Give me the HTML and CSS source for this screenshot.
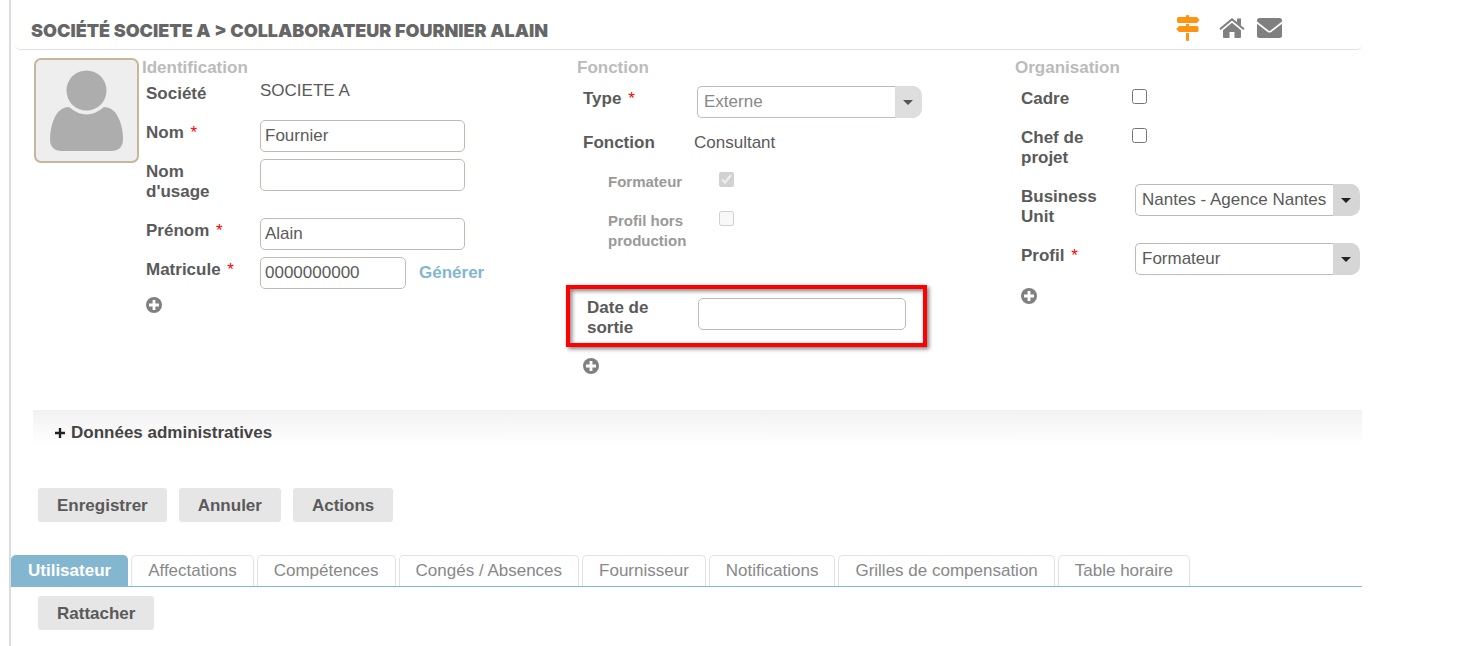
FILE: index.html
```html
<!DOCTYPE html>
<html lang="fr">
<head>
  <meta charset="UTF-8">
  <meta name="viewport" content="width=device-width, initial-scale=1.0">
  <title>Collaborateur</title>
  <link rel="stylesheet" href="styles.css">
</head>
<body>
  <svg class="sprite" aria-hidden="true">
    <symbol id="plus-circle" viewBox="0 0 16 16">
      <circle cx="8" cy="8" r="8" fill="#808080"/>
      <path d="M8 3v10M3 8h10" stroke="#fff" stroke-width="2.800"/>
    </symbol>
  </svg>

  <div class="page">
    <header class="page-header">
      <h1>SOCIÉTÉ SOCIETE A &gt; COLLABORATEUR FOURNIER ALAIN</h1>
      <nav class="header-icons">
        <a href="#" class="icon-sign" aria-label="Guide">
          <svg width="24" height="26" viewBox="0 0 24 26" fill="#ff9410">
            <path d="M10 1q0-1 1-1h1q1 0 1 1v1h7q1 0 1.500.500L23.500 5 21.500 7.500Q21 8 20 8H3Q1 8 1 6.500v-3Q1 2 3 2h7z"/>
            <path d="M10 9h3v2h8q1.500 0 1.500 1.500v3Q22.500 17 21 17H4q-1 0-1.500-.500L.300 14l2.200-2.500Q3 11 4 11h6z"/>
            <path d="M10 18h3v7q0 1-1 1h-1q-1 0-1-1z"/>
          </svg>
        </a>
        <a href="#" aria-label="Accueil">
          <svg width="26" height="20" viewBox="0 0 26 20" fill="#808080">
            <path d="M13 4.800 22 12.300V19q0 1-1 1h-5.500v-6h-5v6H5q-1 0-1-1v-6.700z"/>
            <path d="M1 11.300 13 1.300l12 10" fill="none" stroke="#808080" stroke-width="2.100"/>
            <path d="M18 .500h4v7.500l-4-3.400z"/>
          </svg>
        </a>
        <a href="#" aria-label="Messages">
          <svg width="25" height="20" viewBox="0 0 25 20" fill="#808080">
            <path d="M0 2.500Q0 0 2.500 0h20Q25 0 25 2.500v1L13.500 12.600q-1 .700-2 0L0 3.500z"/>
            <path d="M0 5.800 10.700 14q1.800 1.200 3.600 0L25 5.800v11.700q0 2.500-2.500 2.500h-20Q0 20 0 17.500z"/>
          </svg>
        </a>
      </nav>
    </header>

    <form id="collaborateur">
      <div class="card">
        <div class="photo">
          <svg width="75" height="81" viewBox="0 0 75 81" fill="#adadad">
            <circle cx="37.500" cy="20.500" r="20"/>
            <path d="M20 37q17.500 15 35 0 8 0 13 8c4 7 6 16 6 24q0 12-12 12H13Q1 81 1 69c0-8 2-17 6-24q5-8 13-8z"/>
          </svg>
        </div>

        <section class="col col-ident">
          <h2>Identification</h2>
          <div class="row">
            <span class="label">Société</span>
            <span class="value value-field">SOCIETE A</span>
          </div>
          <div class="row">
            <label class="label" for="nom">Nom <span class="req">*</span></label>
            <input type="text" id="nom" value="Fournier">
          </div>
          <div class="row">
            <label class="label" for="usage">Nom d'usage</label>
            <input type="text" id="usage">
          </div>
          <div class="row">
            <label class="label" for="prenom">Prénom <span class="req">*</span></label>
            <input type="text" id="prenom" value="Alain">
          </div>
          <div class="row">
            <label class="label" for="matricule">Matricule <span class="req">*</span></label>
            <input type="text" id="matricule" class="short" value="0000000000">
            <a href="#" class="generate">Générer</a>
          </div>
          <button type="button" class="add" aria-label="Ajouter"><svg><use href="#plus-circle"/></svg></button>
        </section>

        <section class="col">
          <h2>Fonction</h2>
          <div class="row row-type">
            <label class="label" for="type">Type <span class="req">*</span></label>
            <div class="select disabled">
              <select id="type" disabled><option>Externe</option></select>
            </div>
          </div>
          <div class="row">
            <span class="label">Fonction</span>
            <span class="value value-low">Consultant</span>
          </div>
          <div class="row sub">
            <label class="label" for="formateur">Formateur</label>
            <input type="checkbox" id="formateur" checked disabled>
          </div>
          <div class="row sub">
            <label class="label" for="horsprod">Profil hors production</label>
            <input type="checkbox" id="horsprod" disabled>
          </div>
          <div class="row highlight">
            <label class="label" for="sortie">Date de sortie</label>
            <input type="text" id="sortie">
          </div>
          <button type="button" class="add" aria-label="Ajouter"><svg><use href="#plus-circle"/></svg></button>
        </section>

        <section class="col">
          <h2>Organisation</h2>
          <div class="row">
            <label class="label" for="cadre">Cadre</label>
            <input type="checkbox" id="cadre">
          </div>
          <div class="row">
            <label class="label" for="chef">Chef de projet</label>
            <input type="checkbox" id="chef">
          </div>
          <div class="row">
            <label class="label" for="bu">Business Unit</label>
            <div class="select">
              <select id="bu"><option>Nantes - Agence Nantes</option></select>
            </div>
          </div>
          <div class="row">
            <label class="label" for="profil">Profil <span class="req">*</span></label>
            <div class="select">
              <select id="profil"><option>Formateur</option></select>
            </div>
          </div>
          <button type="button" class="add" aria-label="Ajouter"><svg><use href="#plus-circle"/></svg></button>
        </section>
      </div>

      <button type="button" class="accordion">
        <svg width="10" height="10" viewBox="0 0 10 10"><path d="M5 0v10M0 5h10" stroke="#222" stroke-width="2.400"/></svg>
        Données administratives
      </button>

      <div class="actions">
        <button type="submit" class="btn">Enregistrer</button>
        <button type="reset" class="btn">Annuler</button>
        <button type="button" class="btn">Actions</button>
      </div>
    </form>

    <nav class="tabs">
      <a href="#" class="active">Utilisateur</a>
      <a href="#">Affectations</a>
      <a href="#">Compétences</a>
      <a href="#">Congés / Absences</a>
      <a href="#">Fournisseur</a>
      <a href="#">Notifications</a>
      <a href="#">Grilles de compensation</a>
      <a href="#">Table horaire</a>
    </nav>

    <div class="tab-content">
      <button type="button" class="btn">Rattacher</button>
    </div>
  </div>
</body>
</html>
```
FILE: styles.css
```css
* {
  box-sizing: border-box;
}

body {
  margin: 0;
  background-color: #fff;
  color: #5a5a5a;
  font-family: "Liberation Sans", Arial, sans-serif;
  font-size: 17px;
  line-height: 20px;
}

input, select, button {
  font: inherit;
  color: inherit;
}

.sprite {
  display: none;
}

.page {
  min-height: 100vh;
  margin-left: 9px;
  padding-right: 106px;
  border-left: 2px solid #dcdcdc;
}

/* header */
.page-header {
  display: flex;
  justify-content: space-between;
  align-items: center;
  height: 50px;
  margin-left: 4px;
  padding: 6px 80px 0 16px;
  border-bottom: 1px solid #e2e2e2;
  border-radius: 5px;
}

.page-header h1 {
  margin: 0;
  padding-top: 6px;
  color: #666;
  font-family: Inter, "Liberation Sans", sans-serif;
  font-size: 18px;
  font-weight: 900;
}

.header-icons {
  display: flex;
  align-items: center;
  gap: 12px;
}

.header-icons a, .header-icons svg {
  display: block;
}

.icon-sign {
  margin-right: 7px;
}

/* form */
.card {
  display: grid;
  grid-template-columns: 108px 435fr 438fr 347fr;
  height: 360px;
  padding: 7px 0 0 23px;
}

.photo {
  display: flex;
  justify-content: center;
  align-items: center;
  width: 105px;
  height: 105px;
  margin-top: 1px;
  background-color: #eee;
  border: 2px solid #c7b699;
  border-radius: 7px;
}

.col h2 {
  height: 29px;
  margin: 0;
  padding-top: 1px;
  color: #bbb;
  font-size: 17px;
}

.col-ident h2 {
  height: 24px;
}

.row {
  display: flex;
  align-items: flex-start;
  padding-left: 6px;
}

.col-ident .row {
  padding-left: 4px;
}

.row-type {
  margin-bottom: 5px;
}

.label {
  flex: none;
  width: 111px;
  padding: 3px 20px 16px 0;
  font-weight: bold;
}

.req {
  margin-left: 2px;
  color: #f00;
  font-weight: normal;
}

.value-field {
  margin-left: 3px;
}

.value-low {
  padding-top: 3px;
}

.sub {
  padding-left: 31px;
  color: #999;
  font-size: 15px;
}

input[type="text"], select {
  height: 32px;
  border: 1px solid #bfbbb4;
  border-radius: 5px;
  background-color: #fff;
}

input[type="text"] {
  width: 205px;
  margin-left: 3px;
  padding: 0 4px;
}

input[type="text"].short {
  width: 146px;
}

input[type="checkbox"] {
  width: 15px;
  height: 15px;
  margin: 3px 0 0;
}

.select {
  position: relative;
  width: 225px;
  margin-left: 3px;
}

select {
  display: block;
  width: 100%;
  padding: 0 28px 1px 6px;
  border-right: 0;
  border-radius: 5px 10px 10px 5px;
  appearance: none;
  opacity: 1;
}

.select::before {
  content: "";
  position: absolute;
  top: 0;
  right: 0;
  bottom: 0;
  width: 27px;
  background-color: #d6d6d6;
  border-radius: 0 10px 10px 0;
  pointer-events: none;
}

.select::after {
  content: "";
  position: absolute;
  top: 14px;
  right: 9px;
  border: 5px solid transparent;
  border-top-color: #222;
  border-bottom: 0;
  pointer-events: none;
}

.disabled {
  color: #888;
}

.disabled::before {
  background-color: #dedede;
}

.disabled::after {
  border-top-color: #555;
}

.generate {
  margin-left: 13px;
  padding-top: 6px;
  color: #83b6cf;
  font-weight: bold;
  text-decoration: none;
}

.add {
  display: block;
  margin: 0 0 0 6px;
  padding: 6px 0;
  border: 0;
  background: none;
  cursor: pointer;
}

.add svg {
  display: block;
  width: 16px;
  height: 16px;
}

.col-ident .add {
  margin-left: 4px;
  padding-top: 1px;
}

/* date de sortie */
.row.highlight {
  width: 361px;
  height: 62px;
  margin: 18px 0 5px -11px;
  padding: 9px 0 0 17px;
  border: 4px solid #f00;
  box-shadow: 2px 2px 4px rgba(0, 0, 0, 0.5), inset 2px 2px 4px rgba(0, 0, 0, 0.5);
}

.highlight .label {
  padding-top: 0;
}

.highlight input[type="text"] {
  width: 208px;
  margin-left: 0;
}

/* données administratives */
.accordion {
  display: flex;
  align-items: center;
  gap: 6px;
  width: calc(100% - 22px);
  height: 36px;
  margin-left: 22px;
  padding: 9px 0 0 22px;
  border: 0;
  background: linear-gradient(#f2f2f2, #fff);
  color: #444;
  font-weight: bold;
  cursor: pointer;
}

.btn {
  height: 34px;
  padding: 1px 19px 0;
  border: 0;
  border-radius: 3px;
  background-color: #e6e6e6;
  font-weight: bold;
  cursor: pointer;
}

.actions {
  display: flex;
  gap: 12px;
  padding: 42px 0 33px 27px;
}

/* tabs */
.tabs {
  display: flex;
  gap: 3px;
  border-bottom: 1px solid #83b6cf;
}

.tabs a {
  height: 31px;
  padding: 5px 16px 0;
  border: 1px solid #e2e2e2;
  border-bottom: 0;
  border-radius: 5px 5px 0 0;
  color: #888;
  text-decoration: none;
}

.tabs .active {
  border-color: #83b6cf;
  background-color: #83b6cf;
  color: #fff;
  font-weight: bold;
}

.tab-content {
  padding: 9px 27px;
}
```
